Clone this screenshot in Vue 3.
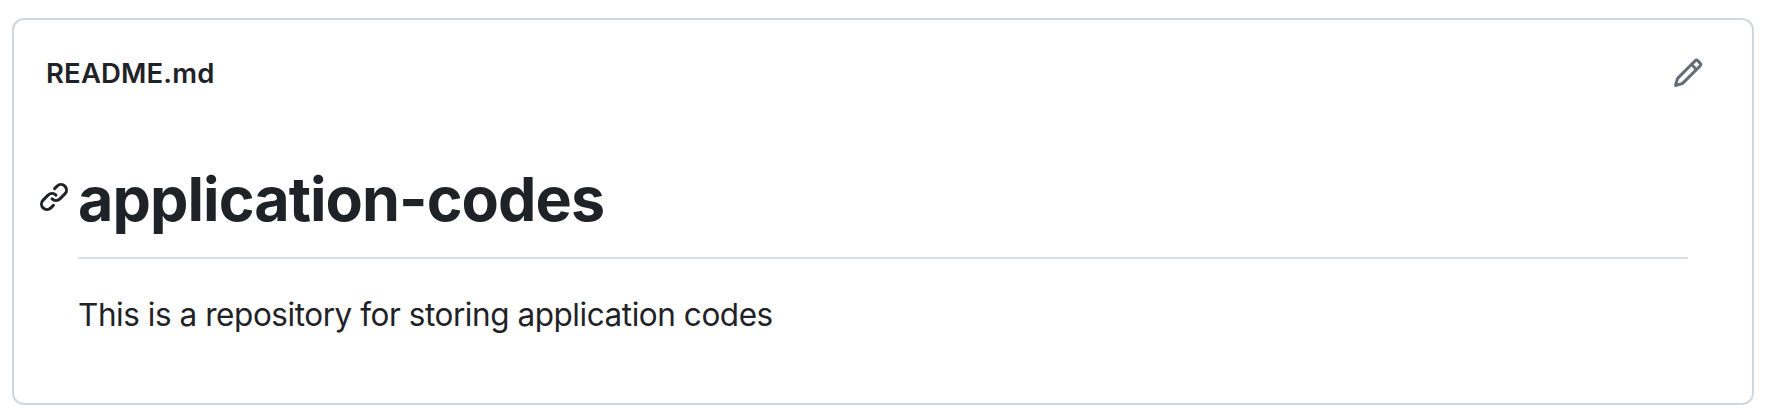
<script setup>
const fileName = 'README.md'
const title = 'application-codes'
const description = 'This is a repository for storing application codes'
</script>

<template>
  <section class="readme">
    <header class="bar">
      <span class="file">{{ fileName }}</span>
      <svg class="pencil" viewBox="0 0 16 16" width="32" height="32" aria-hidden="true">
        <path d="M11.013 1.427a1.75 1.75 0 0 1 2.474 0l1.086 1.086a1.75 1.75 0 0 1 0 2.474l-8.61 8.61c-.21.21-.47.364-.756.445l-3.251.93a.75.75 0 0 1-.927-.928l.929-3.25c.081-.286.235-.547.445-.758l8.61-8.61Zm.176 4.823L9.75 4.81l-6.286 6.287a.253.253 0 0 0-.064.108l-.558 1.953 1.953-.558a.253.253 0 0 0 .108-.064Zm1.238-3.763a.25.25 0 0 0-.354 0L10.811 3.75l1.439 1.44 1.263-1.263a.25.25 0 0 0 0-.354Z" />
      </svg>
    </header>
    <article class="body">
      <div class="heading">
        <svg class="link" viewBox="0 0 16 16" width="32" height="32" aria-hidden="true">
          <path d="m7.775 3.275 1.25-1.25a3.5 3.5 0 1 1 4.95 4.95l-2.5 2.5a3.5 3.5 0 0 1-4.95 0 .751.751 0 0 1 .018-1.042.751.751 0 0 1 1.042-.018 1.998 1.998 0 0 0 2.83 0l2.5-2.5a2.002 2.002 0 0 0-2.83-2.83l-1.25 1.25a.751.751 0 0 1-1.042-.018.751.751 0 0 1-.018-1.042Zm-4.69 9.64a1.998 1.998 0 0 0 2.83 0l1.25-1.25a.751.751 0 0 1 1.042.018.751.751 0 0 1 .018 1.042l-1.25 1.25a3.5 3.5 0 1 1-4.95-4.95l2.5-2.5a3.5 3.5 0 0 1 4.95 0 .751.751 0 0 1-.018 1.042.751.751 0 0 1-1.042.018 1.998 1.998 0 0 0-2.83 0l-2.5 2.5a1.998 1.998 0 0 0 0 2.83Z" />
        </svg>
        <h1 class="title">{{ title }}</h1>
      </div>
      <p class="text">{{ description }}</p>
    </article>
  </section>
</template>

<style>
body {
  background: #fff;
}
</style>

<style scoped>
.readme {
  box-sizing: border-box;
  width: 1742px;
  height: 387px;
  margin: 18px 0 0 12px;
  border: 2px solid #d0d7de;
  border-radius: 12px;
  color: #1f2328;
  font-family: Inter, "Liberation Sans", sans-serif;
  overflow: hidden;
}

.bar {
  display: flex;
  align-items: center;
  justify-content: space-between;
  height: 42px;
  padding: 32px 48px 0 32px;
}

.file {
  font-size: 27.5px;
  font-weight: 600;
  line-height: 42px;
  letter-spacing: 0.15px;
}

.pencil {
  fill: #656d76;
}

.body {
  padding: 58px 64px 0;
}

.heading {
  display: flex;
  align-items: flex-start;
  box-sizing: border-box;
  height: 107px;
  border-bottom: 2px solid #d8dee4;
}

.link {
  flex: none;
  margin: 29px 8px 0 -40px;
  fill: #1f2328;
}

.title {
  margin: 7px 0 0;
  font-size: 61px;
  font-weight: 700;
  line-height: 80px;
  letter-spacing: -0.95px;
  white-space: nowrap;
}

.text {
  margin: 32px 0 0;
  font-size: 31.5px;
  line-height: 48px;
  letter-spacing: -0.45px;
}
</style>
